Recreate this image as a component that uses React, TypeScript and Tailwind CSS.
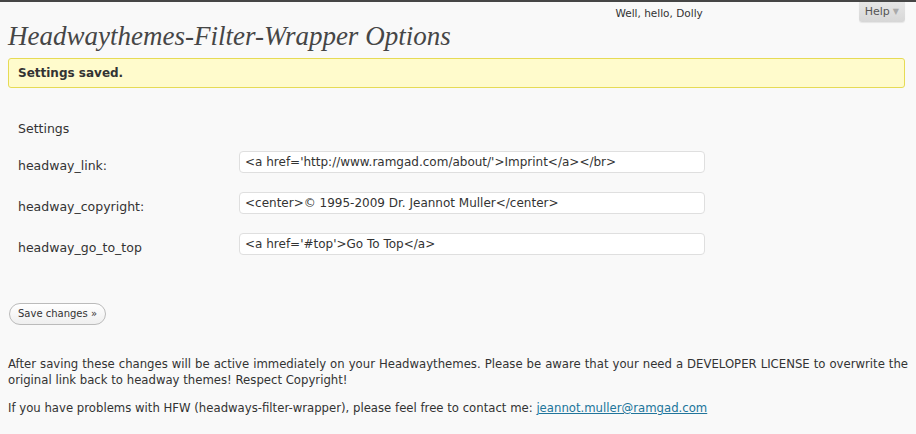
import React from "react";

const sans = "font-['Lucida_Grande','DejaVu_Sans',sans-serif]";

function Field({ label, value }: { label: string; value: string }) {
  return (
    <div className="flex items-center h-[41px]">
      <div className="w-[221px] pt-[9px] text-[12.5px] text-[#333]">{label}</div>
      <div className="w-[466px] h-[22px] bg-white border border-[#dfdfdf] rounded-[4px] flex items-center px-[5px] text-[12px] text-[#333] whitespace-nowrap overflow-hidden">
        {value}
      </div>
    </div>
  );
}

export default function App() {
  return (
    <div className={`min-h-[434px] w-[916px] bg-[#f9f9f9] border-t-2 border-[#464646] ${sans} text-[#333]`}>
      <div className="flex justify-end h-[20px]">
        <div className="text-[10.5px] text-[#333] pt-[4px] mr-[156px]">Well, hello, Dolly</div>
        <div className="mr-[11px] h-[20px] px-[6px] bg-gradient-to-b from-[#e6e6e6] to-[#d7d7d7] rounded-b-[3px] text-[11px] text-[#555] flex items-center gap-[3px] shadow-[0_1px_1px_rgba(0,0,0,0.08)]">
          <span>Help</span>
          <span className="text-[8px] text-[#aaa]">▼</span>
        </div>
      </div>
      <div className="px-[8px]">
        <h2 className="font-['Georgia','Liberation_Serif',serif] italic text-[27px] text-[#464646] leading-[28px] h-[34px] whitespace-nowrap">
          Headwaythemes-Filter-Wrapper Options
        </h2>
        <div className="mt-[2px] mr-[3px] h-[30px] bg-[#fffbcc] border border-[#e6db55] rounded-[3px] flex items-center px-[9px] text-[12px] font-bold text-[#333]">
          Settings saved.
        </div>
        <div className="px-[10px] pt-[29px]">
          <div className="text-[12.5px] h-[22px] pt-[2px] leading-[20px]">Settings</div>
          <div className="mt-[2px]">
            <Field label="headway_link:" value="<a href='http://www.ramgad.com/about/'>Imprint</a></br>" />
            <Field label="headway_copyright:" value="<center>© 1995-2009 Dr. Jeannot Muller</center>" />
            <Field label="headway_go_to_top" value="<a href='#top'>Go To Top</a>" />
          </div>
        </div>
        <div className="pt-[36px]">
          <button className="ml-[1px] h-[22px] px-[8px] rounded-full border border-[#bbb] bg-gradient-to-b from-white to-[#efefef] text-[10px] text-[#333] leading-[20px]">
            Save changes »
          </button>
        </div>
        <p className="mt-[31px] text-[11.7px] leading-[16px] text-justify text-[#333]">
          After saving these changes will be active immediately on your Headwaythemes. Please be aware that your need a DEVELOPER LICENSE to overwrite the original link back to headway themes! Respect Copyright!
        </p>
        <p className="mt-[12px] text-[11.7px] leading-[16px] text-[#333]">
          If you have problems with HFW (headways-filter-wrapper), please feel free to contact me:{" "}
          <a className="text-[#21759b] underline" href="#">jeannot.muller@ramgad.com</a>
        </p>
      </div>
    </div>
  );
}
